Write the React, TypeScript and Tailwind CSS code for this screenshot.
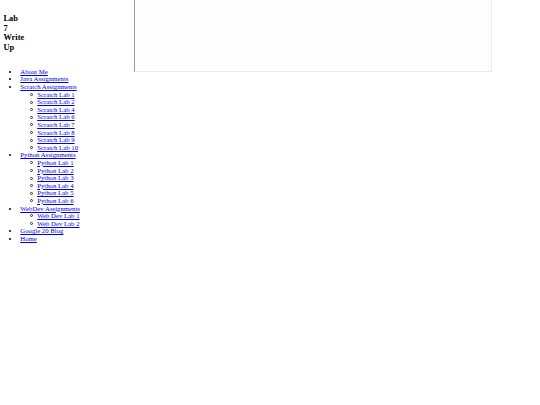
import React from 'react';

type Item = { label: string; children?: string[] };

const nav: Item[] = [
  { label: 'About Me' },
  { label: 'Java Assignments' },
  {
    label: 'Scratch Assignments',
    children: ['Scratch Lab 1', 'Scratch Lab 2', 'Scratch Lab 4', 'Scratch Lab 6', 'Scratch Lab 7', 'Scratch Lab 8', 'Scratch Lab 9', 'Scratch Lab 10'],
  },
  {
    label: 'Python Assignments',
    children: ['Python Lab 1', 'Python Lab 2', 'Python Lab 3', 'Python Lab 4', 'Python Lab 5', 'Python Lab 6'],
  },
  { label: 'WebDev Assignments', children: ['Web Dev Lab 1', 'Web Dev Lab 2'] },
  { label: 'Google 20 Blog' },
  { label: 'Home' },
];

const Link = ({ children }: { children: React.ReactNode }) => (
  <a href="#" className="text-[#0000ee] underline decoration-[0.6px] underline-offset-[1px]">
    {children}
  </a>
);

export default function App() {
  return (
    <div className="min-h-screen bg-white font-['Liberation_Serif',serif] text-black">
      <div className="flex items-start">
        {/* left column: title + nav */}
        <div className="w-[134px] shrink-0 pl-[3.4px]">
          <h2 className="mt-[14px] text-[8.4px] font-bold leading-[9.7px]">
            Lab
            <br />
            7
            <br />
            Write
            <br />
            Up
          </h2>

          <ul className="mt-[15px] list-disc list-outside pl-[16.9px] text-[6.75px] leading-[7.6px]">
            {nav.map((item) => (
              <li key={item.label}>
                <Link>{item.label}</Link>
                {item.children && (
                  <ul className="pl-[16.9px]">
                    {item.children.map((c) => (
                      <li
                        key={c}
                        className="relative list-none before:absolute before:left-[-7.6px] before:top-[2.4px] before:h-[3px] before:w-[3px] before:rounded-full before:border-[0.7px] before:border-[#333] before:content-['']"
                      >
                        <Link>{c}</Link>
                      </li>
                    ))}
                  </ul>
                )}
              </li>
            ))}
          </ul>
        </div>

        {/* embedded frame */}
        <div className="h-[72px] w-[358px] border-b-[1.5px] border-l-[1.5px] border-r-[1.5px] border-b-[#ececec] border-l-[#9a9a9a] border-r-[#ececec] bg-[#fdfdfd]" />
      </div>
    </div>
  );
}
